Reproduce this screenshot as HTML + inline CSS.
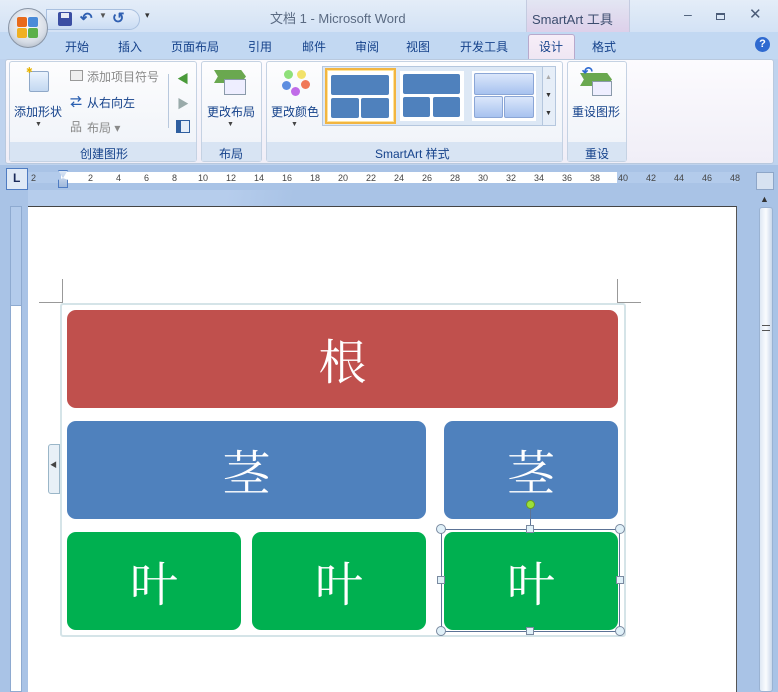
<!DOCTYPE html>
<html><head><meta charset="utf-8"><style>
*{margin:0;padding:0;box-sizing:border-box}
body{width:778px;height:692px;overflow:hidden;position:relative;font-family:"Liberation Sans","Noto Sans CJK SC",sans-serif;font-size:12px;color:#15428b;background:#bfd3ee}
.a{position:absolute}
.t{font-size:12px;color:#15428b;white-space:nowrap}
.shape{position:absolute;border-radius:9px;color:#fff;font-family:"Noto Serif CJK SC","Liberation Serif",serif;font-size:48px;display:flex;align-items:center;justify-content:center;line-height:1}
</style></head><body>
<!-- title bar -->
<div class="a" style="left:0;top:0;width:778px;height:32px;background:linear-gradient(#e4edf8,#d3e2f5)"></div>
<div class="a" style="left:526px;top:0;width:104px;height:32px;background:linear-gradient(#e3e6f3,#ddd0ea);border-left:1px solid #c4cbe0;border-right:1px solid #c4cbe0"></div>
<div class="a t" style="left:532px;top:9px;color:#3b4c6e;font-size:13px">SmartArt 工具</div>
<div class="a t" style="left:270px;top:8px;color:#5a6a82;font-size:13px">文档 1 - Microsoft Word</div>
<div class="a t" style="left:684px;top:6px;color:#4b5c78;font-size:14px">–</div>
<div class="a" style="left:716px;top:13px;width:9px;height:7px;border:1px solid #4b5c78;border-top-width:2px"></div>
<div class="a t" style="left:749px;top:5px;color:#4b5c78;font-size:15px">✕</div>
<!-- quick access -->
<div class="a" style="left:46px;top:9px;width:94px;height:21px;border-radius:0 11px 11px 0;background:linear-gradient(#e8f0fb,#cadcf3);border:1px solid #a9c0df"></div>
<div class="a" style="left:58px;top:12px;width:14px;height:14px;background:#3b4ea3;border-radius:2px"></div>
<div class="a" style="left:61px;top:13px;width:8px;height:5px;background:#e8ecf5"></div>
<div class="a t" style="left:80px;top:9px;color:#2f5fb1;font-size:15px;font-weight:bold">↶</div>
<div class="a t" style="left:99px;top:11px;color:#555;font-size:8px">▼</div>
<div class="a t" style="left:112px;top:9px;color:#2f5fb1;font-size:15px;font-weight:bold">↺</div>
<div class="a t" style="left:145px;top:10px;color:#333;font-size:9px">▾</div>
<!-- tabs row -->
<div class="a" style="left:0;top:32px;width:778px;height:27px;background:#c2d8f2"></div>
<!-- office button -->
<div class="a" style="left:8px;top:8px;width:40px;height:40px;border-radius:50%;background:radial-gradient(circle at 50% 40%,#fff,#d7dde6 60%,#9aa6b5);border:1px solid #8894a5"></div>
<div class="a" style="left:17px;top:17px;width:10px;height:10px;background:#e86a1a;border-radius:2px"></div>
<div class="a" style="left:28px;top:17px;width:10px;height:10px;background:#4a8bd8;border-radius:2px"></div>
<div class="a" style="left:17px;top:28px;width:10px;height:10px;background:#f0b020;border-radius:2px"></div>
<div class="a" style="left:28px;top:28px;width:10px;height:10px;background:#5bb04a;border-radius:2px"></div>
<div class="a t" style="left:65px;top:38px">开始</div>
<div class="a t" style="left:118px;top:38px">插入</div>
<div class="a t" style="left:171px;top:38px">页面布局</div>
<div class="a t" style="left:248px;top:38px">引用</div>
<div class="a t" style="left:302px;top:38px">邮件</div>
<div class="a t" style="left:355px;top:38px">审阅</div>
<div class="a t" style="left:406px;top:38px">视图</div>
<div class="a t" style="left:460px;top:38px">开发工具</div>
<div class="a" style="left:528px;top:34px;width:47px;height:26px;background:linear-gradient(#f7eef8,#efe6f3);border:1px solid #b8a9cc;border-bottom:none;border-radius:3px 3px 0 0"></div>
<div class="a t" style="left:539px;top:38px">设计</div>
<div class="a t" style="left:592px;top:38px">格式</div>
<div class="a" style="left:755px;top:37px;width:15px;height:15px;border-radius:50%;background:#2f6ad0;color:#fff;font-size:11px;font-weight:bold;text-align:center;line-height:15px">?</div>
<!-- ribbon -->
<div class="a" style="left:5px;top:59px;width:769px;height:105px;background:linear-gradient(#fcfbfe,#f0eef7);border:1px solid #b9c9de;border-radius:3px"></div>
<!-- group 1 -->
<div class="a" style="left:9px;top:61px;width:188px;height:101px;border:1px solid #c5d2e3;border-radius:3px;background:linear-gradient(#fdfdfe,#eef2f8)"></div>
<div class="a" style="left:10px;top:142px;width:186px;height:19px;background:#d8e4f3"></div>
<div class="a t" style="left:80px;top:145px">创建图形</div>
<div class="a" style="left:29px;top:71px;width:20px;height:21px;border:1px solid #8fa8c8;border-radius:2px;background:linear-gradient(#eaf3fd,#c3d8f1)"></div>
<div class="a t" style="left:26px;top:66px;color:#e8b400;font-size:8px">✱</div>
<div class="a t" style="left:14px;top:103px">添加形状</div>
<div class="a t" style="left:35px;top:121px;font-size:7px;color:#444">▼</div>
<div class="a" style="left:70px;top:70px;width:13px;height:11px;border:1px solid #999;background:#eee"></div>
<div class="a t" style="left:87px;top:68px;color:#8a8a8a">添加项目符号</div>
<div class="a t" style="left:70px;top:93px;color:#2a5fb0;font-weight:bold">⇄</div>
<div class="a t" style="left:87px;top:94px">从右向左</div>
<div class="a t" style="left:70px;top:118px;color:#888">品</div>
<div class="a t" style="left:87px;top:119px;color:#8a8a8a">布局 ▾</div>
<div class="a" style="left:168px;top:74px;width:1px;height:54px;background:#b8c8dd"></div>
<div class="a t" style="left:177px;top:70px;color:#4a9a3a">◀</div>
<div class="a t" style="left:177px;top:95px;color:#9aa">▶</div>
<div class="a" style="left:176px;top:120px;width:14px;height:13px;border:1px solid #2f5fa0;background:linear-gradient(90deg,#2f5fa0 4px,#e6eef8 4px)"></div>
<!-- group 2 -->
<div class="a" style="left:201px;top:61px;width:61px;height:101px;border:1px solid #c5d2e3;border-radius:3px;background:linear-gradient(#fdfdfe,#eef2f8)"></div>
<div class="a" style="left:202px;top:142px;width:59px;height:19px;background:#d8e4f3"></div>
<div class="a t" style="left:219px;top:145px">布局</div>
<div class="a" style="left:214px;top:70px;width:32px;height:13px;background:#6aa84f;clip-path:polygon(0 0,85% 0,100% 50%,85% 100%,0 100%,12% 50%)"></div>
<div class="a" style="left:224px;top:79px;width:22px;height:16px;border:1px solid #8a9aaa;background:#eef"></div>
<div class="a t" style="left:207px;top:103px">更改布局</div>
<div class="a t" style="left:227px;top:121px;font-size:7px;color:#444">▼</div>
<!-- group 3 -->
<div class="a" style="left:266px;top:61px;width:297px;height:101px;border:1px solid #c5d2e3;border-radius:3px;background:linear-gradient(#fdfdfe,#eef2f8)"></div>
<div class="a" style="left:267px;top:142px;width:295px;height:19px;background:#d8e4f3"></div>
<div class="a t" style="left:375px;top:145px">SmartArt 样式</div>
<div class="a" style="left:284px;top:70px;width:9px;height:9px;border-radius:50%;background:#8fe07a"></div>
<div class="a" style="left:297px;top:70px;width:9px;height:9px;border-radius:50%;background:#f2e26a"></div>
<div class="a" style="left:282px;top:81px;width:9px;height:9px;border-radius:50%;background:#5e8ee0"></div>
<div class="a" style="left:301px;top:80px;width:9px;height:9px;border-radius:50%;background:#f07858"></div>
<div class="a" style="left:291px;top:87px;width:9px;height:9px;border-radius:50%;background:#c06be8"></div>
<div class="a t" style="left:271px;top:103px">更改颜色</div>
<div class="a t" style="left:291px;top:121px;font-size:7px;color:#444">▼</div>
<div class="a" style="left:322px;top:66px;width:234px;height:60px;background:#dde8f5;border:1px solid #b5c7de"></div>
<div class="a" style="left:325px;top:68px;width:71px;height:56px;border:2px solid #f2b541;background:#fff;box-shadow:inset 0 0 0 1px #ffe39a"></div>
<div class="a" style="left:331px;top:75px;width:58px;height:20px;background:#4f81bd;border-radius:2px"></div>
<div class="a" style="left:331px;top:98px;width:28px;height:20px;background:#4f81bd;border-radius:2px"></div>
<div class="a" style="left:361px;top:98px;width:28px;height:20px;background:#4f81bd;border-radius:2px"></div>
<div class="a" style="left:400px;top:71px;width:64px;height:50px;background:#fff"></div>
<div class="a" style="left:403px;top:74px;width:57px;height:20px;background:#4f81bd;border-radius:2px"></div>
<div class="a" style="left:403px;top:97px;width:27px;height:20px;background:#4f81bd;border-radius:2px"></div>
<div class="a" style="left:433px;top:97px;width:27px;height:20px;background:#4f81bd;border-radius:2px"></div>
<div class="a" style="left:472px;top:71px;width:64px;height:50px;background:#fff"></div>
<div class="a" style="left:474px;top:73px;width:60px;height:22px;background:linear-gradient(#dbe7fb,#a7c2ef);border:1px solid #8ba6d6;border-radius:2px"></div>
<div class="a" style="left:474px;top:96px;width:29px;height:22px;background:linear-gradient(#dbe7fb,#a7c2ef);border:1px solid #8ba6d6;border-radius:2px"></div>
<div class="a" style="left:504px;top:96px;width:30px;height:22px;background:linear-gradient(#dbe7fb,#a7c2ef);border:1px solid #8ba6d6;border-radius:2px"></div>
<div class="a" style="left:542px;top:67px;width:13px;height:58px;background:#e6eef8;border-left:1px solid #b5c7de"></div>
<div class="a t" style="left:545px;top:74px;font-size:7px;color:#aaa">▲</div>
<div class="a t" style="left:545px;top:92px;font-size:7px;color:#333">▼</div>
<div class="a t" style="left:545px;top:110px;font-size:7px;color:#333">▼</div>
<!-- group 4 -->
<div class="a" style="left:567px;top:61px;width:60px;height:101px;border:1px solid #c5d2e3;border-radius:3px;background:linear-gradient(#fdfdfe,#eef2f8)"></div>
<div class="a" style="left:568px;top:142px;width:58px;height:19px;background:#d8e4f3"></div>
<div class="a t" style="left:585px;top:145px">重设</div>
<div class="a" style="left:580px;top:73px;width:32px;height:13px;background:#6aa84f;clip-path:polygon(0 0,85% 0,100% 50%,85% 100%,0 100%,12% 50%)"></div>
<div class="a" style="left:592px;top:81px;width:20px;height:15px;border:1px solid #8a9aaa;background:#eef"></div>
<div class="a t" style="left:582px;top:64px;color:#2f6ad0;font-size:13px;font-weight:bold">↶</div>
<div class="a t" style="left:572px;top:103px">重设图形</div>
<!-- ruler area -->
<div class="a" style="left:0;top:165px;width:778px;height:527px;background:#a9c3e6"></div>
<div class="a" style="left:28px;top:190px;width:330px;height:16px;background:linear-gradient(100deg,#b6cdec 60%,#a9c3e6 80%)"></div>
<div class="a" style="left:6px;top:168px;width:22px;height:22px;border:1px solid #4f7cc2;background:#dfe9f6"></div>
<div class="a t" style="left:13px;top:171px;color:#1a2a5a;font-weight:bold">L</div>
<div class="a" style="left:28px;top:172px;width:33px;height:11px;background:#b3cbeb"></div>
<div class="a" style="left:61px;top:172px;width:556px;height:11px;background:#fff"></div>
<div class="a" style="left:617px;top:172px;width:122px;height:11px;background:#b3cbeb"></div>
<div class="a" style="left:58px;top:170px;width:10px;height:18px;background:linear-gradient(#dbe6f5,#9fb8db);border:1px solid #4f7cc2;clip-path:polygon(0 0,100% 0,50% 45%,100% 55%,100% 100%,0 100%,0 55%,50% 45%)"></div>
<div class="a" style="left:0;top:173px;font-size:9px;color:#444;font-family:'Liberation Sans',sans-serif">
<span class="a" style="left:31px">2</span><span class="a" style="left:88px">2</span><span class="a" style="left:116px">4</span><span class="a" style="left:144px">6</span><span class="a" style="left:172px">8</span><span class="a" style="left:198px">10</span><span class="a" style="left:226px">12</span><span class="a" style="left:254px">14</span><span class="a" style="left:282px">16</span><span class="a" style="left:310px">18</span><span class="a" style="left:338px">20</span><span class="a" style="left:366px">22</span><span class="a" style="left:394px">24</span><span class="a" style="left:422px">26</span><span class="a" style="left:450px">28</span><span class="a" style="left:478px">30</span><span class="a" style="left:506px">32</span><span class="a" style="left:534px">34</span><span class="a" style="left:562px">36</span><span class="a" style="left:590px">38</span><span class="a" style="left:618px">40</span><span class="a" style="left:646px">42</span><span class="a" style="left:674px">44</span><span class="a" style="left:702px">46</span><span class="a" style="left:730px">48</span></div>
<!-- right scrollbar -->
<div class="a" style="left:756px;top:172px;width:18px;height:18px;border:1px solid #8ea6c8;background:#d7e2f1"></div>
<div class="a t" style="left:760px;top:194px;font-size:9px;color:#333">▲</div>
<div class="a" style="left:759px;top:207px;width:14px;height:485px;border:1px solid #9ab2d2;border-radius:3px;background:linear-gradient(90deg,#dfe8f4,#fafcfe 50%,#c9d7ea)"></div>
<div class="a" style="left:762px;top:325px;width:8px;height:6px;border-top:1px solid #555;border-bottom:1px solid #555"></div>
<!-- left ruler -->
<div class="a" style="left:10px;top:206px;width:12px;height:486px;background:#fff;border:1px solid #8eaad0"></div>
<div class="a" style="left:10px;top:206px;width:12px;height:100px;background:#b3cbeb;border:1px solid #8eaad0"></div>
<!-- page -->
<div class="a" style="left:28px;top:206px;width:709px;height:486px;background:#fff;border-top:1px solid #444;border-right:1px solid #555"></div>
<!-- crop marks -->
<div class="a" style="left:62px;top:279px;width:1px;height:24px;background:#999"></div>
<div class="a" style="left:39px;top:302px;width:24px;height:1px;background:#999"></div>
<div class="a" style="left:617px;top:279px;width:1px;height:24px;background:#999"></div>
<div class="a" style="left:617px;top:302px;width:24px;height:1px;background:#999"></div>
<!-- smartart frame -->
<div class="a" style="left:60px;top:303px;width:566px;height:334px;border:2px solid #d5e4e8;border-radius:3px"></div>
<div class="a" style="left:48px;top:444px;width:12px;height:50px;background:#e8f0f7;border:1px solid #9ab6c8;border-radius:3px 0 0 3px"></div>
<div class="a t" style="left:50px;top:460px;font-size:7px;color:#444">◀</div>
<div class="shape" style="left:67px;top:310px;width:551px;height:98px;background:#c0504d">根</div>
<div class="shape" style="left:67px;top:421px;width:359px;height:98px;background:#4f81bd">茎</div>
<div class="shape" style="left:444px;top:421px;width:174px;height:98px;background:#4f81bd">茎</div>
<div class="shape" style="left:67px;top:532px;width:174px;height:98px;background:#00b050">叶</div>
<div class="shape" style="left:252px;top:532px;width:174px;height:98px;background:#00b050">叶</div>
<div class="shape" style="left:444px;top:532px;width:174px;height:98px;background:#00b050">叶</div>
<!-- selection -->
<div class="a" style="left:441px;top:529px;width:179px;height:103px;border:1px solid #5c7396"></div>
<div class="a" style="left:530px;top:504px;width:1px;height:25px;background:#5c7396"></div>
<div class="a" style="left:526px;top:500px;width:9px;height:9px;border-radius:50%;background:#9be03a;border:1px solid #6a9a20"></div>
<div class="a" style="left:436px;top:524px;width:10px;height:10px;border-radius:50%;background:#e0f0f8;border:1px solid #7a8aa0"></div>
<div class="a" style="left:615px;top:524px;width:10px;height:10px;border-radius:50%;background:#e0f0f8;border:1px solid #7a8aa0"></div>
<div class="a" style="left:436px;top:626px;width:10px;height:10px;border-radius:50%;background:#e0f0f8;border:1px solid #7a8aa0"></div>
<div class="a" style="left:615px;top:626px;width:10px;height:10px;border-radius:50%;background:#e0f0f8;border:1px solid #7a8aa0"></div>
<div class="a" style="left:526px;top:525px;width:8px;height:8px;background:#e0f0f8;border:1px solid #7a8aa0"></div>
<div class="a" style="left:526px;top:627px;width:8px;height:8px;background:#e0f0f8;border:1px solid #7a8aa0"></div>
<div class="a" style="left:437px;top:576px;width:8px;height:8px;background:#e0f0f8;border:1px solid #7a8aa0"></div>
<div class="a" style="left:616px;top:576px;width:8px;height:8px;background:#e0f0f8;border:1px solid #7a8aa0"></div>
</body></html>
